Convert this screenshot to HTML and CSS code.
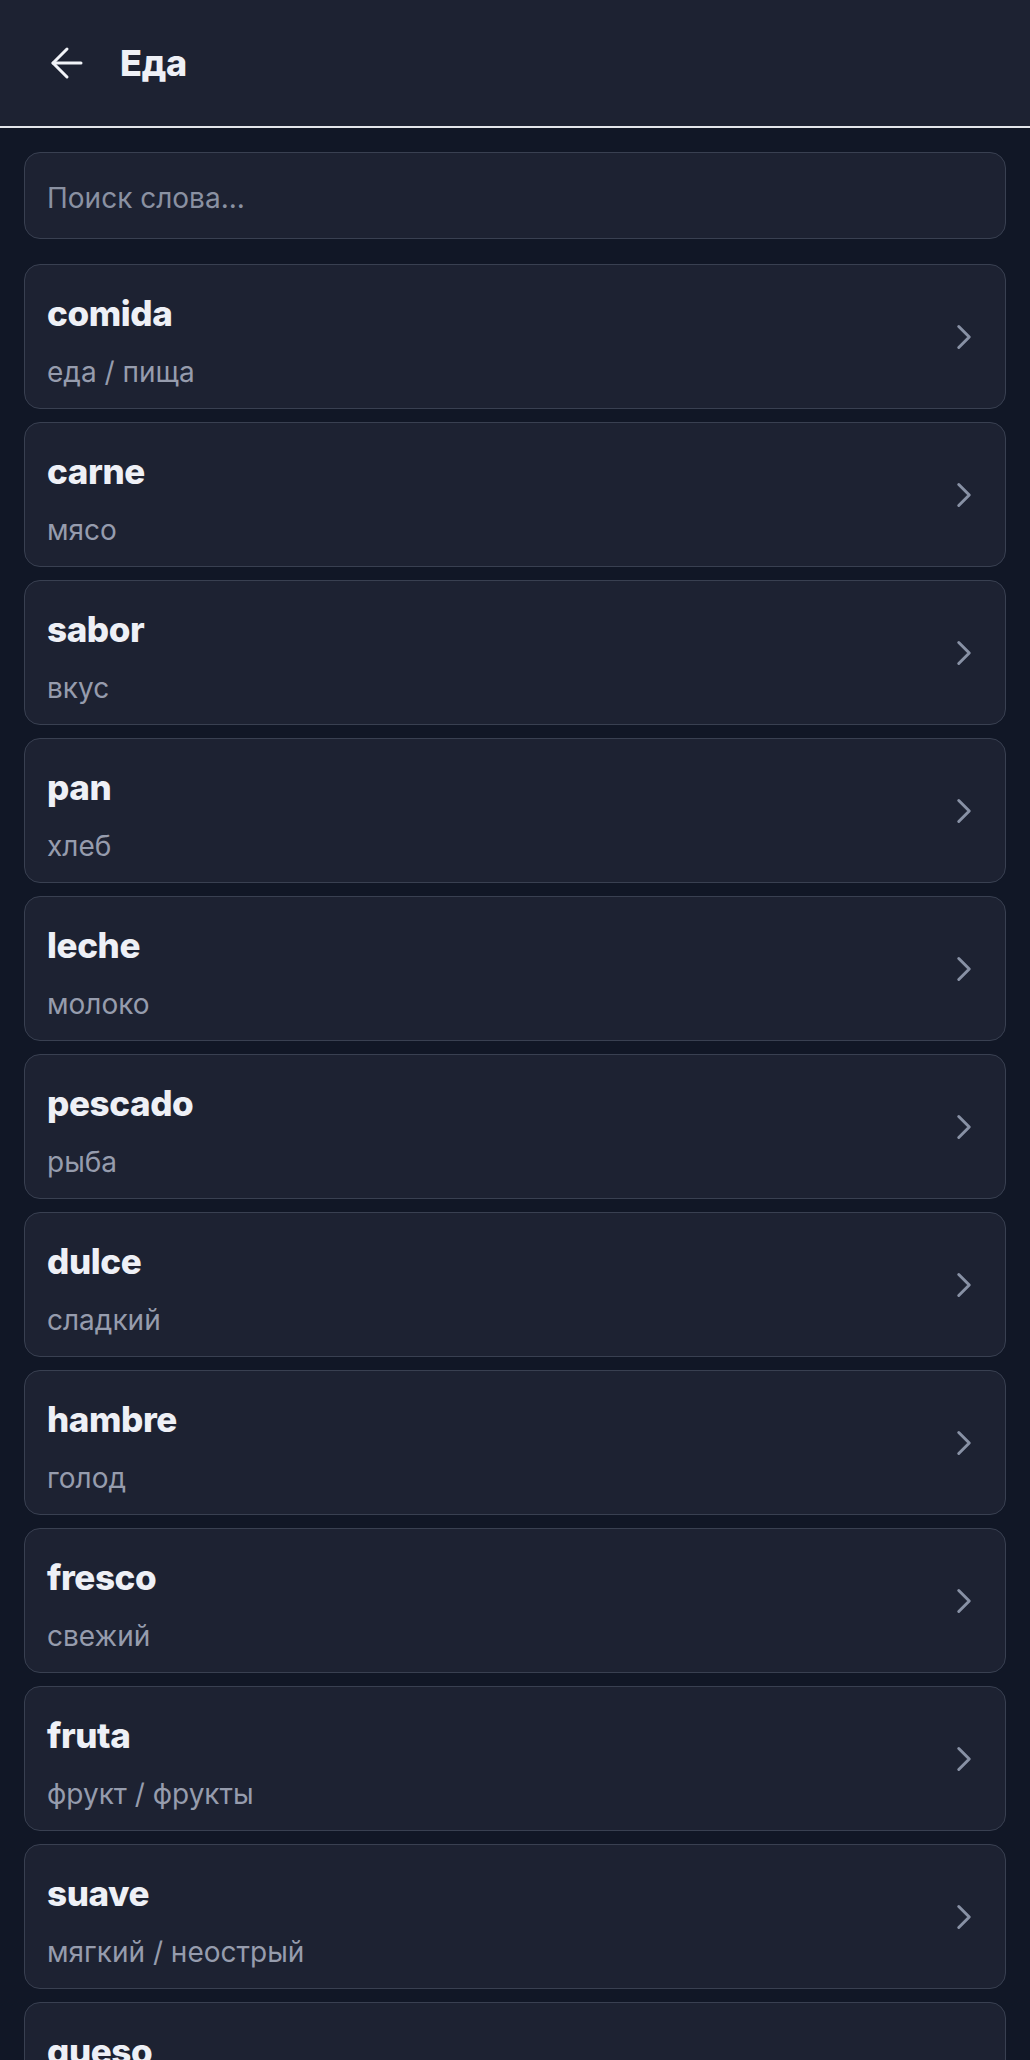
FILE: index.html
```html
<!DOCTYPE html>
<html lang="ru">
<head>
    <meta charset="UTF-8">
    <meta name="viewport" content="width=device-width, initial-scale=1.0">
    <title>Еда</title>
    <link rel="stylesheet" href="styles.css">
</head>
<body>
    <header class="topbar">
        <button class="back-btn" aria-label="Назад">
            <svg width="48" height="48" viewBox="0 0 24 24" fill="none" stroke="currentColor" stroke-width="1.5" stroke-linecap="round" stroke-linejoin="round"><path d="M19 12H5"/><path d="m12 19-7-7 7-7"/></svg>
        </button>
        <h1 class="title">Еда</h1>
    </header>

    <main class="content">
        <input class="search" type="text" placeholder="Поиск слова...">

        <div class="word-list">
            <div class="word-card">
                <div class="word-text">
                    <div class="word">comida</div>
                    <div class="translation">еда / пища</div>
                </div>
                <svg class="chevron" width="42" height="42" viewBox="0 0 24 24" fill="none" stroke="currentColor" stroke-width="1.7" stroke-linecap="round" stroke-linejoin="round"><path d="m9 18 6-6-6-6"/></svg>
            </div>
            <div class="word-card">
                <div class="word-text">
                    <div class="word">carne</div>
                    <div class="translation">мясо</div>
                </div>
                <svg class="chevron" width="42" height="42" viewBox="0 0 24 24" fill="none" stroke="currentColor" stroke-width="1.7" stroke-linecap="round" stroke-linejoin="round"><path d="m9 18 6-6-6-6"/></svg>
            </div>
            <div class="word-card">
                <div class="word-text">
                    <div class="word">sabor</div>
                    <div class="translation">вкус</div>
                </div>
                <svg class="chevron" width="42" height="42" viewBox="0 0 24 24" fill="none" stroke="currentColor" stroke-width="1.7" stroke-linecap="round" stroke-linejoin="round"><path d="m9 18 6-6-6-6"/></svg>
            </div>
            <div class="word-card">
                <div class="word-text">
                    <div class="word">pan</div>
                    <div class="translation">хлеб</div>
                </div>
                <svg class="chevron" width="42" height="42" viewBox="0 0 24 24" fill="none" stroke="currentColor" stroke-width="1.7" stroke-linecap="round" stroke-linejoin="round"><path d="m9 18 6-6-6-6"/></svg>
            </div>
            <div class="word-card">
                <div class="word-text">
                    <div class="word">leche</div>
                    <div class="translation">молоко</div>
                </div>
                <svg class="chevron" width="42" height="42" viewBox="0 0 24 24" fill="none" stroke="currentColor" stroke-width="1.7" stroke-linecap="round" stroke-linejoin="round"><path d="m9 18 6-6-6-6"/></svg>
            </div>
            <div class="word-card">
                <div class="word-text">
                    <div class="word">pescado</div>
                    <div class="translation">рыба</div>
                </div>
                <svg class="chevron" width="42" height="42" viewBox="0 0 24 24" fill="none" stroke="currentColor" stroke-width="1.7" stroke-linecap="round" stroke-linejoin="round"><path d="m9 18 6-6-6-6"/></svg>
            </div>
            <div class="word-card">
                <div class="word-text">
                    <div class="word">dulce</div>
                    <div class="translation">сладкий</div>
                </div>
                <svg class="chevron" width="42" height="42" viewBox="0 0 24 24" fill="none" stroke="currentColor" stroke-width="1.7" stroke-linecap="round" stroke-linejoin="round"><path d="m9 18 6-6-6-6"/></svg>
            </div>
            <div class="word-card">
                <div class="word-text">
                    <div class="word">hambre</div>
                    <div class="translation">голод</div>
                </div>
                <svg class="chevron" width="42" height="42" viewBox="0 0 24 24" fill="none" stroke="currentColor" stroke-width="1.7" stroke-linecap="round" stroke-linejoin="round"><path d="m9 18 6-6-6-6"/></svg>
            </div>
            <div class="word-card">
                <div class="word-text">
                    <div class="word">fresco</div>
                    <div class="translation">свежий</div>
                </div>
                <svg class="chevron" width="42" height="42" viewBox="0 0 24 24" fill="none" stroke="currentColor" stroke-width="1.7" stroke-linecap="round" stroke-linejoin="round"><path d="m9 18 6-6-6-6"/></svg>
            </div>
            <div class="word-card">
                <div class="word-text">
                    <div class="word">fruta</div>
                    <div class="translation">фрукт / фрукты</div>
                </div>
                <svg class="chevron" width="42" height="42" viewBox="0 0 24 24" fill="none" stroke="currentColor" stroke-width="1.7" stroke-linecap="round" stroke-linejoin="round"><path d="m9 18 6-6-6-6"/></svg>
            </div>
            <div class="word-card">
                <div class="word-text">
                    <div class="word">suave</div>
                    <div class="translation">мягкий / неострый</div>
                </div>
                <svg class="chevron" width="42" height="42" viewBox="0 0 24 24" fill="none" stroke="currentColor" stroke-width="1.7" stroke-linecap="round" stroke-linejoin="round"><path d="m9 18 6-6-6-6"/></svg>
            </div>
            <div class="word-card">
                <div class="word-text">
                    <div class="word">queso</div>
                    <div class="translation">сыр</div>
                </div>
                <svg class="chevron" width="42" height="42" viewBox="0 0 24 24" fill="none" stroke="currentColor" stroke-width="1.7" stroke-linecap="round" stroke-linejoin="round"><path d="m9 18 6-6-6-6"/></svg>
            </div>
        </div>
    </main>
</body>
</html>
```

FILE: styles.css
```css
body {
    margin: 0;
    background-color: #111726;
    font-family: Inter, "Noto Sans", sans-serif;
    color: #f1f3f8;
}
.topbar {
    height: 128px;
    box-sizing: border-box;
    display: flex;
    align-items: center;
    padding-left: 43px;
    gap: 29px;
    background: #1d2232;
    border-bottom: 2px solid #e3e5ea;
}
.back-btn {
    background: none;
    border: none;
    padding: 0;
    color: #f1f3f8;
    display: flex;
    cursor: pointer;
}
.title {
    margin: 0;
    font-family: Inter, sans-serif;
    font-size: 36px;
    font-weight: 800;
    letter-spacing: -0.3px;
    color: #eef0f6;
}
.content {
    padding: 24px;
    display: flex;
    flex-direction: column;
    gap: 25px;
}
.search {
    height: 87px;
    box-sizing: border-box;
    padding: 5px 22px 0;
    background: #1d2232;
    border: 1px solid #394051;
    border-radius: 16px;
    font-family: Inter, sans-serif;
    font-size: 28px;
    color: #e5e7eb;
    outline: none;
}
.search::placeholder {
    color: #8a91a2;
}
.word-list {
    display: flex;
    flex-direction: column;
    gap: 13px;
}
.word-card {
    height: 145px;
    box-sizing: border-box;
    display: flex;
    align-items: center;
    justify-content: space-between;
    padding: 0 20px 0 22px;
    background: #1d2232;
    border: 1px solid #394051;
    border-radius: 16px;
}
.word-text {
    padding-top: 8px;
}
.word {
    font-size: 35px;
    font-weight: 800;
    letter-spacing: -0.4px;
    line-height: 1.2;
    color: #eef0f6;
}
.translation {
    margin-top: 22px;
    font-size: 28px;
    line-height: 1.2;
    color: #969cad;
}
.chevron {
    color: #8891a5;
}
```
